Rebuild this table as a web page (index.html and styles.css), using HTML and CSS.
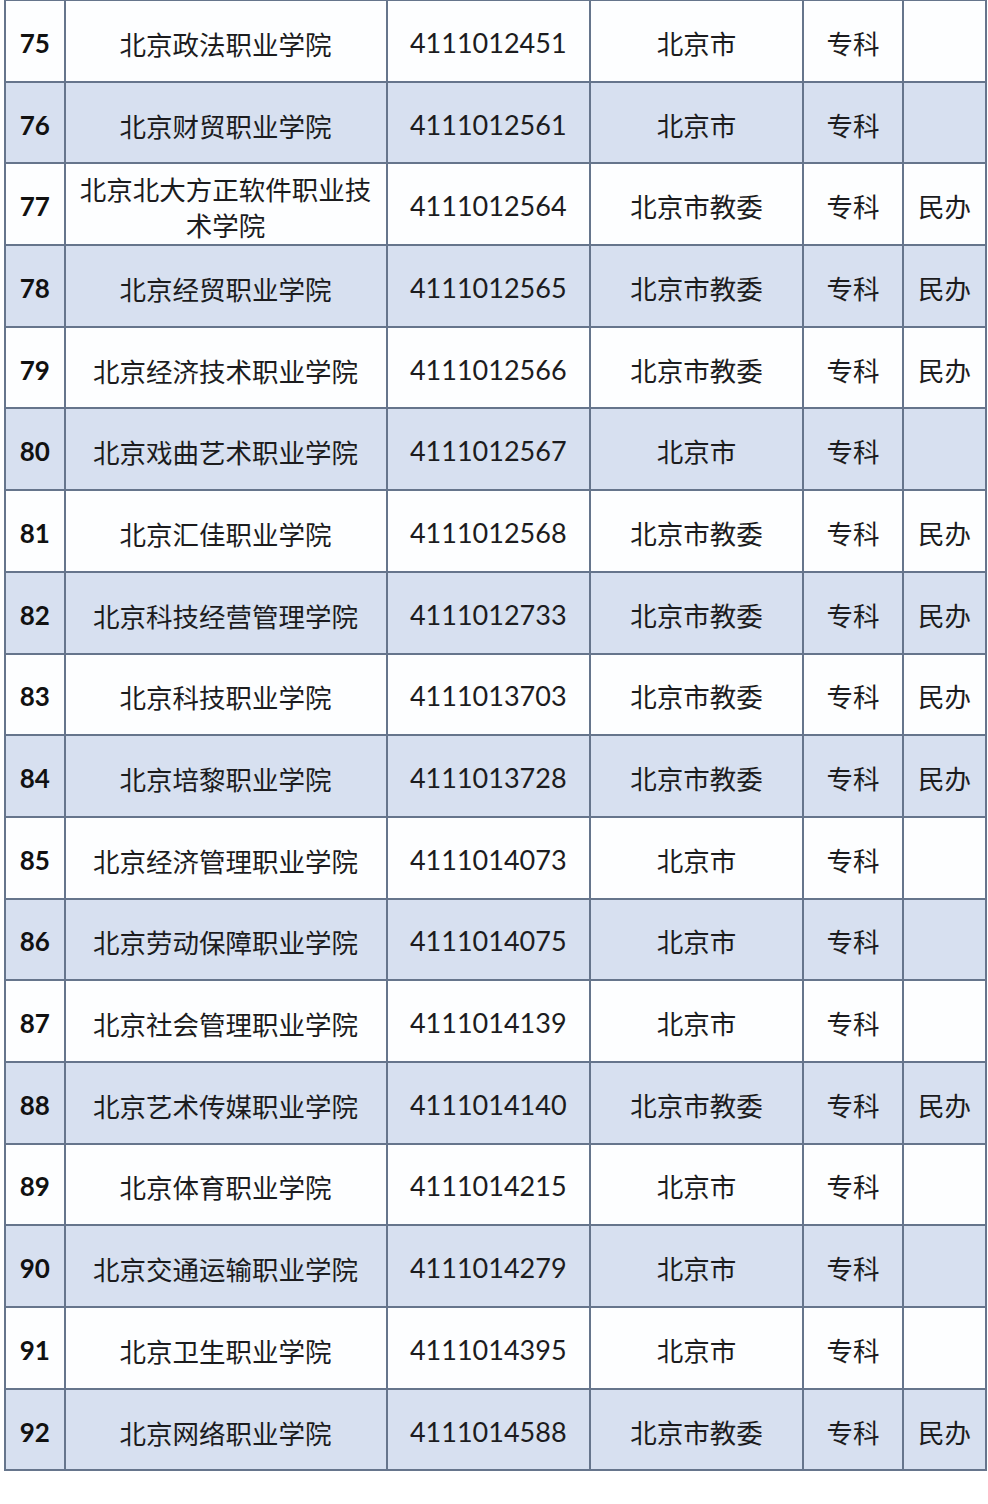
FILE: index.html
```html
<!DOCTYPE html>
<html lang="zh-CN">
<head>
<meta charset="utf-8">
<title>北京高校名单</title>
<link rel="stylesheet" href="styles.css">
</head>
<body>
<div class="table">
  <div class="row"><div class="c no">75</div><div class="c name">北京政法职业学院</div><div class="c code">4111012451</div><div class="c">北京市</div><div class="c">专科</div><div class="c"></div></div>
  <div class="row alt"><div class="c no">76</div><div class="c name">北京财贸职业学院</div><div class="c code">4111012561</div><div class="c">北京市</div><div class="c">专科</div><div class="c"></div></div>
  <div class="row"><div class="c no">77</div><div class="c name">北京北大方正软件职业技术学院</div><div class="c code">4111012564</div><div class="c">北京市教委</div><div class="c">专科</div><div class="c">民办</div></div>
  <div class="row alt"><div class="c no">78</div><div class="c name">北京经贸职业学院</div><div class="c code">4111012565</div><div class="c">北京市教委</div><div class="c">专科</div><div class="c">民办</div></div>
  <div class="row"><div class="c no">79</div><div class="c name">北京经济技术职业学院</div><div class="c code">4111012566</div><div class="c">北京市教委</div><div class="c">专科</div><div class="c">民办</div></div>
  <div class="row alt"><div class="c no">80</div><div class="c name">北京戏曲艺术职业学院</div><div class="c code">4111012567</div><div class="c">北京市</div><div class="c">专科</div><div class="c"></div></div>
  <div class="row"><div class="c no">81</div><div class="c name">北京汇佳职业学院</div><div class="c code">4111012568</div><div class="c">北京市教委</div><div class="c">专科</div><div class="c">民办</div></div>
  <div class="row alt"><div class="c no">82</div><div class="c name">北京科技经营管理学院</div><div class="c code">4111012733</div><div class="c">北京市教委</div><div class="c">专科</div><div class="c">民办</div></div>
  <div class="row"><div class="c no">83</div><div class="c name">北京科技职业学院</div><div class="c code">4111013703</div><div class="c">北京市教委</div><div class="c">专科</div><div class="c">民办</div></div>
  <div class="row alt"><div class="c no">84</div><div class="c name">北京培黎职业学院</div><div class="c code">4111013728</div><div class="c">北京市教委</div><div class="c">专科</div><div class="c">民办</div></div>
  <div class="row"><div class="c no">85</div><div class="c name">北京经济管理职业学院</div><div class="c code">4111014073</div><div class="c">北京市</div><div class="c">专科</div><div class="c"></div></div>
  <div class="row alt"><div class="c no">86</div><div class="c name">北京劳动保障职业学院</div><div class="c code">4111014075</div><div class="c">北京市</div><div class="c">专科</div><div class="c"></div></div>
  <div class="row"><div class="c no">87</div><div class="c name">北京社会管理职业学院</div><div class="c code">4111014139</div><div class="c">北京市</div><div class="c">专科</div><div class="c"></div></div>
  <div class="row alt"><div class="c no">88</div><div class="c name">北京艺术传媒职业学院</div><div class="c code">4111014140</div><div class="c">北京市教委</div><div class="c">专科</div><div class="c">民办</div></div>
  <div class="row"><div class="c no">89</div><div class="c name">北京体育职业学院</div><div class="c code">4111014215</div><div class="c">北京市</div><div class="c">专科</div><div class="c"></div></div>
  <div class="row alt"><div class="c no">90</div><div class="c name">北京交通运输职业学院</div><div class="c code">4111014279</div><div class="c">北京市</div><div class="c">专科</div><div class="c"></div></div>
  <div class="row"><div class="c no">91</div><div class="c name">北京卫生职业学院</div><div class="c code">4111014395</div><div class="c">北京市</div><div class="c">专科</div><div class="c"></div></div>
  <div class="row alt"><div class="c no">92</div><div class="c name">北京网络职业学院</div><div class="c code">4111014588</div><div class="c">北京市教委</div><div class="c">专科</div><div class="c">民办</div></div>
</div>
</body>
</html>
```
FILE: styles.css
```css
html, body {
  margin: 0;
  padding: 0;
  background: #ffffff;
}
body {
  width: 988px;
  height: 1504px;
  overflow: hidden;
  font-family: "Noto Sans CJK SC", "Noto Sans", sans-serif;
  color: #1c1c1e;
}
.table {
  width: 983px;
  margin: -1px 0 0 4px;
  padding: 2px;
  box-sizing: border-box;
  background: #66758c;
  display: flex;
  flex-direction: column;
  gap: 2px;
}
.row {
  display: grid;
  grid-template-columns: 57.5px 320px 201.5px 211px 98px 81px;
  gap: 2px;
  height: 79.7px;
}
.c {
  background: #fdfeff;
  display: flex;
  align-items: center;
  justify-content: center;
  text-align: center;
  font-size: 26.5px;
  line-height: 36px;
  padding: 4px 4px 0;
  box-sizing: border-box;
  min-width: 0;
}
.row.alt .c {
  background: #d7e0f0;
}
.no {
  font-family: Lato, "Liberation Sans", sans-serif;
  font-weight: 700;
  font-size: 26px;
  color: #111111;
  padding: 4px 0 0;
}
.code {
  font-family: Lato, "Liberation Sans", sans-serif;
  font-size: 27px;
}
.name {
  padding: 6px 6px 0;
}
```
